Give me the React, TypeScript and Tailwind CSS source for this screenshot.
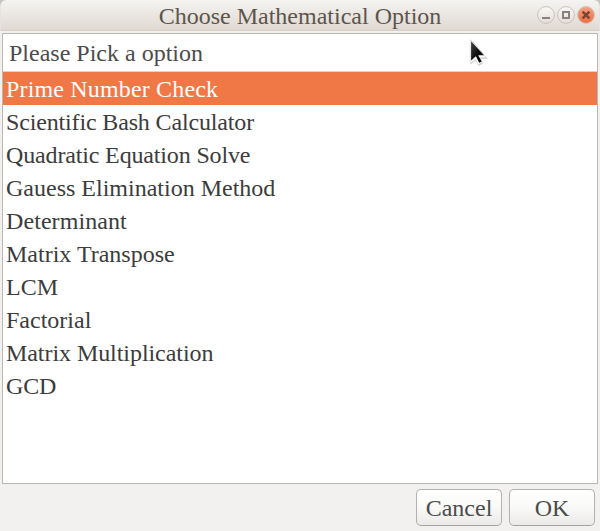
const options = [
  { label: "Prime Number Check", tracking: "tracking-[0.16px]" },
  { label: "Scientific Bash Calculator", tracking: "tracking-[-0.15px]" },
  { label: "Quadratic Equation Solve", tracking: "tracking-[-0.15px]" },
  { label: "Gauess Elimination Method", tracking: "" },
  { label: "Determinant", tracking: "tracking-[0.08px]" },
  { label: "Matrix Transpose", tracking: "" },
  { label: "LCM", tracking: "" },
  { label: "Factorial", tracking: "" },
  { label: "Matrix Multiplication", tracking: "tracking-[-0.06px]" },
  { label: "GCD", tracking: "tracking-[-0.2px]" },
];

const buttonClass =
  "flex h-[37px] w-[86px] items-center justify-center rounded-[5px] border border-[#b3b0ad] border-b-[#a5a29f] bg-linear-to-b from-white via-[#f9f9f8] to-[#ebeae9] text-[#4c4c4c]";

function WindowControls() {
  return (
    <svg className="absolute top-[5px] right-[3px] h-[20px] w-[60px]" viewBox="0 0 60 20" fill="none">
      <defs>
        <linearGradient id="plain" x1="0" y1="0" x2="0" y2="1">
          <stop stopColor="#faf9f8" />
          <stop offset="1" stopColor="#e2ddd8" />
        </linearGradient>
        <linearGradient id="close" x1="0" y1="0" x2="0" y2="1">
          <stop stopColor="#f6a283" />
          <stop offset="1" stopColor="#ef6b3e" />
        </linearGradient>
      </defs>
      <circle cx="10" cy="10" r="8.4" fill="url(#plain)" stroke="#c9c2bb" />
      <circle cx="30" cy="10" r="8.4" fill="url(#plain)" stroke="#c9c2bb" />
      <circle cx="50" cy="10" r="8.4" fill="url(#close)" stroke="#d4c4ba" />
      <rect x="6" y="12" width="8" height="2" fill="#8a8178" />
      <rect x="27" y="7" width="6" height="6" stroke="#8a8178" strokeWidth="2" />
      <path d="M46.6 6.6l6.8 6.8M53.4 6.6l-6.8 6.8" stroke="#7a4634" strokeWidth="2.6" />
    </svg>
  );
}

function Pointer() {
  return (
    <svg className="absolute top-[38px] left-[468px] h-[30px] w-[22px]" viewBox="0 0 22 30">
      <defs>
        <linearGradient id="arrow" x1="0" y1="0" x2="1" y2="1">
          <stop stopColor="#444" />
          <stop offset="0.5" stopColor="#111" />
          <stop offset="1" stopColor="#000" />
        </linearGradient>
      </defs>
      <path d="M2.5 1.5v24l4.8-4.3 2.8 5.6 4-2-2.6-5h7z" fill="#777" opacity="0.3" stroke="#777" transform="translate(0.6 0.6)" />
      <path d="M2.3 1.3v24.4l5-4.5 2.7 5.4 4-2-2.7-4.8h7.4z" fill="#fff" stroke="#c8c8c8" strokeWidth="0.5" />
      <path d="M3.1 3.2v19.4l4.8-4.4 3.3 6.6 2.4-1.2-3.4-6.3h5.8z" fill="url(#arrow)" />
    </svg>
  );
}

export default function App() {
  return (
    <div className="relative flex h-[531px] w-[600px] flex-col overflow-hidden bg-[#f2f1f0] font-['Liberation_Serif',serif] text-[24px] text-[#3c3c3c] [font-feature-settings:'liga'_1]">
      <div className="h-[31px] shrink-0 bg-[#c5c3c1]">
        <header className="relative flex h-[31px] justify-center rounded-t-[6px] border-x border-b border-x-[#e6e2de] border-b-[#d4cec7] bg-linear-to-b from-[#f5f4f2] to-[#dfd9d2] text-[#5d554c]">
          <h1 className="leading-[33px]">Choose Mathematical Option</h1>
          <WindowControls />
        </header>
      </div>
      <main className="mx-[2px] mt-[2px] flex h-[451px] shrink-0 flex-col border border-[#bab6b1] bg-white">
        <div className="flex h-[38px] shrink-0 items-center border-b border-[#d9d7d5] pl-[6px] text-[#4c4c4c]">
          Please Pick a option
        </div>
        <ul>
          {options.map(({ label, tracking }, i) => (
            <li
              key={label}
              className={`h-[33px] pl-[3px] leading-[35px] ${tracking} ${i === 0 ? "bg-[#f07746] text-white" : ""}`}
            >
              {label}
            </li>
          ))}
        </ul>
      </main>
      <footer className="flex justify-end gap-[7px] pt-[5px] pr-[5px]">
        <button className={buttonClass}>Cancel</button>
        <button className={buttonClass}>OK</button>
      </footer>
      <Pointer />
    </div>
  );
}
